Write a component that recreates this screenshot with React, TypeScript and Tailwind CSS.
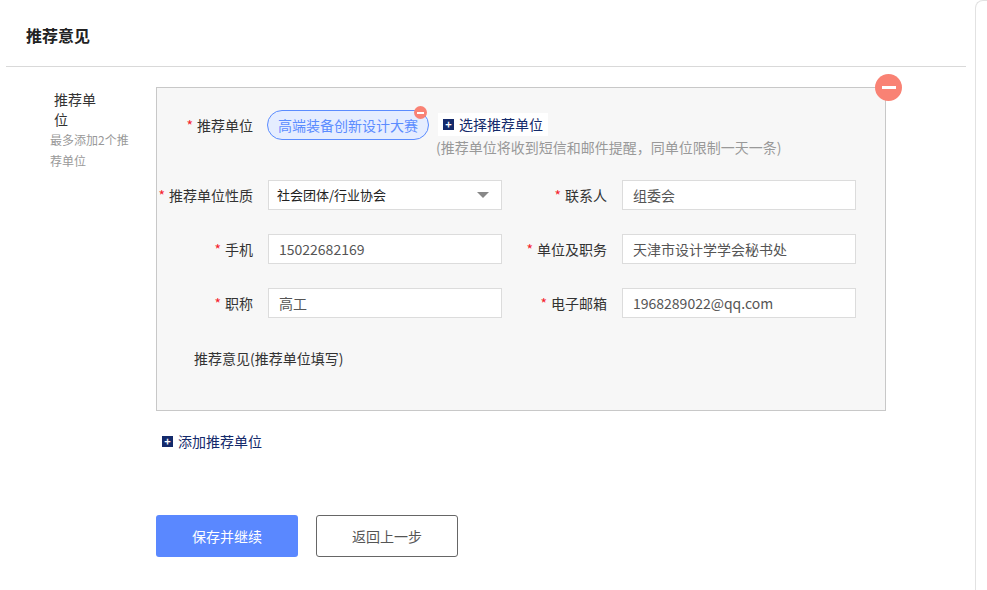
import React from 'react';

const font = { fontFamily: '"Noto Sans CJK SC", "Liberation Sans", sans-serif' };

function Label({ text, w }: { text: string; w: string }) {
  return (
    <div className={`${w} shrink-0 text-right text-[14px] text-[#333] leading-[30px]`}>
      <span className="text-[#f5222d] mr-1">*</span>
      {text}
    </div>
  );
}

function Field({ value, select }: { value: string; select?: boolean }) {
  return (
    <div className="ml-[15px] w-[234px] h-[30px] bg-white border border-[#dcdcdc] flex items-center justify-between px-[10px] text-[14px] text-[#555]">
      <span className={select ? 'text-[13px] text-[#222] -ml-[2px]' : ''}>{value}</span>
      {select && <span className="w-0 h-0 border-l-[6px] border-r-[6px] border-t-[6px] border-l-transparent border-r-transparent border-t-[#888] mr-[2px]" />}
    </div>
  );
}

function PlusBox() {
  return (
    <span className="inline-flex w-[11px] h-[11px] bg-[#142a6b] items-center justify-center text-white text-[11px] leading-none font-bold mr-[5px]">+</span>
  );
}

function Row({ l1, v1, l2, v2, select }: { l1: string; v1: string; l2: string; v2: string; select?: boolean }) {
  return (
    <div className="flex items-center h-[30px]">
      <Label text={l1} w="w-[96px]" />
      <Field value={v1} select={select} />
      <Label text={l2} w="w-[105px]" />
      <Field value={v2} />
    </div>
  );
}

export default function App() {
  return (
    <div className="w-[987px] h-[590px] bg-white relative overflow-hidden" style={font}>
      <div className="absolute right-0 top-0 bottom-0 w-[12px] border-l border-t border-[#e2e2e2] rounded-tl-[8px] bg-white" />
      <div className="h-[67px] mx-[6px] w-[960px] border-b border-[#d9d9d9] flex items-center pl-[20px] pt-[4px] text-[16px] font-bold text-[#222]">
        推荐意见
      </div>
      <div className="flex mt-[20px]">
        <div className="w-[106px] pl-[50px] pt-[2px] shrink-0">
          <div className="text-[14px] text-[#333] pl-[4px] leading-[20px]">推荐单位</div>
          <div className="text-[12px] text-[#999] leading-[21px] w-[84px]">最多添加2个推荐单位</div>
        </div>
        <div className="ml-[50px]">
          <div className="relative w-[730px] h-[324px] bg-[#f7f7f7] border border-[#c8c8c8] pt-[22px]">
            <div className="absolute -top-[14px] -right-[17px] w-[27px] h-[27px] rounded-full bg-[#f98274] flex items-center justify-center">
              <div className="w-[14px] h-[3px] bg-white" />
            </div>
            <div className="flex items-start">
              <Label text="推荐单位" w="w-[96px]" />
              <div className="relative ml-[14px] h-[30px] px-[10px] rounded-full border border-[#5b8cff] bg-[#e5edff] text-[14px] text-[#5b8cff] flex items-center">
                高端装备创新设计大赛
                <div className="absolute -top-[5px] right-[1px] w-[13px] h-[13px] rounded-full bg-[#f98274] flex items-center justify-center">
                  <div className="w-[7px] h-[2px] bg-white" />
                </div>
              </div>
              <div className="ml-[9px]">
                <div className="inline-flex items-center bg-white h-[23px] px-[5px] text-[14px] text-[#142a6b]">
                  <PlusBox />选择推荐单位
                </div>
                <div className="text-[14px] text-[#999] -ml-[2px] mt-[1px] leading-[20px]">(推荐单位将收到短信和邮件提醒，同单位限制一天一条)</div>
              </div>
            </div>
            <div className="mt-[23px] flex flex-col gap-[24px]">
              <Row l1="推荐单位性质" v1="社会团体/行业协会" l2="联系人" v2="组委会" select />
              <Row l1="手机" v1="15022682169" l2="单位及职务" v2="天津市设计学学会秘书处" />
              <Row l1="职称" v1="高工" l2="电子邮箱" v2="1968289022@qq.com" />
            </div>
            <div className="mt-[30px] pl-[37px] text-[14px] text-[#333]">推荐意见(推荐单位填写)</div>
          </div>
          <div className="mt-[20px] ml-[6px] flex items-center text-[14px] text-[#142a6b]">
            <PlusBox />添加推荐单位
          </div>
          <div className="mt-[63px] flex gap-[18px]">
            <button className="w-[142px] h-[42px] rounded-[3px] bg-[#5a88ff] text-white text-[14px]">保存并继续</button>
            <button className="w-[142px] h-[42px] rounded-[3px] border border-[#666] bg-white text-[#555] text-[14px]">返回上一步</button>
          </div>
        </div>
      </div>
    </div>
  );
}
